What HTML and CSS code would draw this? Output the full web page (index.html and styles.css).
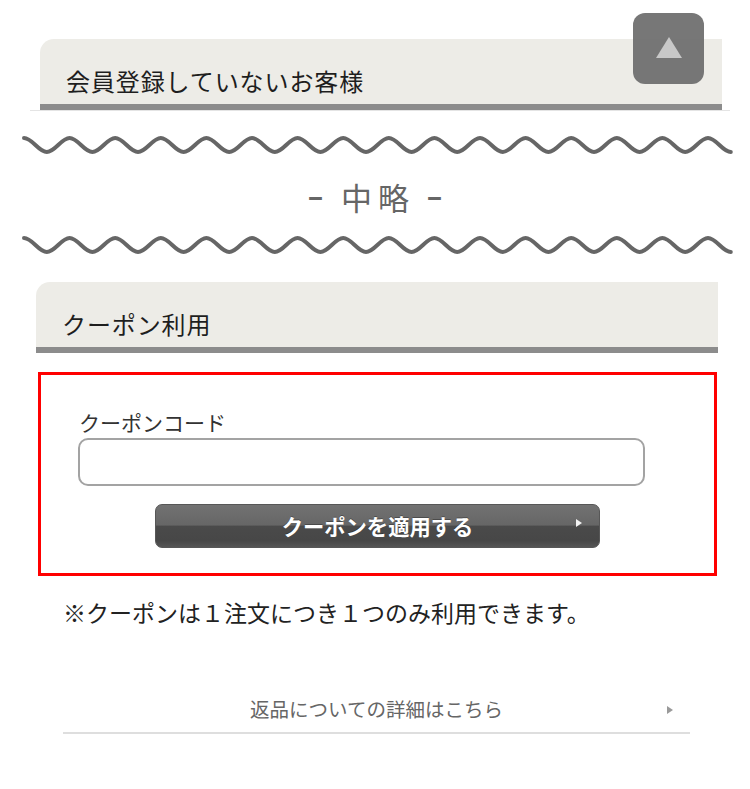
FILE: index.html
```html
<!DOCTYPE html>
<html lang="ja">
<head>
<meta charset="utf-8">
<link rel="stylesheet" href="styles.css">
</head>
<body>
<div class="page">
  <div class="sec1">
    <h2 class="head head1">会員登録していないお客様</h2>
  </div>

  <div class="omit">
    <svg class="wave" viewBox="0 0 750 24" width="750" height="24" aria-hidden="true">
      <path d="M24 5 C32.2 5 38.6 19 46.8 19 S61.4 5 69.6 5 S84.2 19 92.4 19 S107 5 115.2 5 S129.8 19 138 19 S152.6 5 160.8 5 S175.4 19 183.6 19 S198.2 5 206.4 5 S221 19 229.2 19 S243.8 5 252 5 S266.6 19 274.8 19 S289.4 5 297.6 5 S312.2 19 320.4 19 S335 5 343.2 5 S357.8 19 366 19 S380.6 5 388.8 5 S403.4 19 411.6 19 S426.2 5 434.4 5 S449 19 457.2 19 S471.8 5 480 5 S494.6 19 502.8 19 S517.4 5 525.6 5 S540.2 19 548.4 19 S563 5 571.2 5 S585.8 19 594 19 S608.6 5 616.8 5 S631.4 19 639.6 19 S654.2 5 662.4 5 S677 19 685.2 19 S699.8 5 708 5 S722.6 19 730.8 19"/>
    </svg>
    <p class="omit-text"><span class="dash">–</span><span class="omit-word">中</span><span class="omit-word">略</span><span class="dash">–</span></p>
    <svg class="wave" viewBox="0 0 750 24" width="750" height="24" aria-hidden="true">
      <path d="M24 5 C32.2 5 38.6 19 46.8 19 S61.4 5 69.6 5 S84.2 19 92.4 19 S107 5 115.2 5 S129.8 19 138 19 S152.6 5 160.8 5 S175.4 19 183.6 19 S198.2 5 206.4 5 S221 19 229.2 19 S243.8 5 252 5 S266.6 19 274.8 19 S289.4 5 297.6 5 S312.2 19 320.4 19 S335 5 343.2 5 S357.8 19 366 19 S380.6 5 388.8 5 S403.4 19 411.6 19 S426.2 5 434.4 5 S449 19 457.2 19 S471.8 5 480 5 S494.6 19 502.8 19 S517.4 5 525.6 5 S540.2 19 548.4 19 S563 5 571.2 5 S585.8 19 594 19 S608.6 5 616.8 5 S631.4 19 639.6 19 S654.2 5 662.4 5 S677 19 685.2 19 S699.8 5 708 5 S722.6 19 730.8 19"/>
    </svg>
  </div>

  <div class="sec2">
    <h2 class="head head2">クーポン利用</h2>
  </div>

  <div class="coupon-box">
    <label class="coupon-label" for="coupon">クーポンコード</label>
    <input class="coupon-input" id="coupon" type="text">
    <button class="coupon-btn" type="button">
      <span class="btn-text">クーポンを適用する</span>
      <span class="btn-arrow"></span>
    </button>
  </div>

  <p class="note">※クーポンは１注文につき１つのみ利用できます。</p>

  <a class="return-link" href="#">
    <span class="link-text">返品についての詳細はこちら</span>
    <span class="link-arrow"></span>
  </a>
</div>

<a class="to-top" href="#" aria-label="ページトップへ"><span class="to-top-tri"></span></a>
</body>
</html>
```

FILE: styles.css
```css
html, body {
  margin: 0;
  padding: 0;
  background: #ffffff;
}

body {
  font-family: "Noto Sans CJK JP", "Noto Sans", sans-serif;
  color: #222;
  width: 750px;
  height: 789px;
  overflow: hidden;
  position: relative;
}

.page {
  padding-top: 39px;
}

.head {
  margin: 0;
  height: 71px;
  box-sizing: border-box;
  background: #edece7;
  border-bottom: 6px solid #8c8c8c;
  border-top-left-radius: 14px;
  font-size: 24px;
  font-weight: 400;
  letter-spacing: 0.9px;
  color: #1e1e1e;
  display: flex;
  align-items: center;
  padding-top: 18px;
}

.sec1 {
  margin: 0 20px 0 30px;
  border-bottom: 1px solid #e4e4e4;
}

.head1 {
  margin: 0 8px 0 10px;
  padding-left: 26px;
}

.omit {
  margin-top: 22px;
}

.wave {
  display: block;
}

.wave path {
  fill: none;
  stroke: #666666;
  stroke-width: 4;
  stroke-linecap: round;
}

.omit-text {
  margin: 0;
  height: 76px;
  display: flex;
  justify-content: center;
  align-items: center;
  color: #666;
  padding: 2px 0 0 0;
  box-sizing: border-box;
}

.omit-word {
  font-size: 31px;
  line-height: 1;
  margin: 0 3px;
}

.dash {
  font-family: "Noto Sans", sans-serif;
  font-size: 30px;
  line-height: 1;
  font-weight: 600;
  margin: 0 15px;
}

.sec2 {
  margin: 25px 32px 0 36px;
}

.head2 {
  padding-left: 26px;
}

.coupon-box {
  margin: 19px 33px 0 38px;
  border: 3px solid #ff0000;
  padding: 34px 0 25px 37px;
  display: flex;
  flex-direction: column;
  align-items: flex-start;
}

.coupon-label {
  font-size: 21px;
  line-height: 26px;
  color: #333;
  margin-left: 1px;
}

.coupon-input {
  margin-top: 3px;
  width: 567px;
  height: 48px;
  box-sizing: border-box;
  border: 2px solid #a3a3a3;
  border-radius: 10px;
  background: #fff;
  padding: 0 12px;
  font-size: 18px;
}

.coupon-btn {
  margin: 18px 0 0 77px;
  width: 445px;
  height: 44px;
  box-sizing: border-box;
  border: 1px solid #575757;
  border-radius: 7px;
  background: linear-gradient(to bottom, #727272 0%, #666 48%, #4a4a4a 50%, #474747 85%, #555 100%);
  position: relative;
  display: flex;
  align-items: center;
  justify-content: center;
  padding: 0;
  font-family: "Noto Sans CJK JP", "Noto Sans", sans-serif;
  cursor: pointer;
}

.btn-text {
  color: #fff;
  font-size: 21.3px;
  font-weight: 700;
  line-height: 1;
  text-shadow: 0 -1px 0 rgba(0,0,0,0.3);
}

.btn-arrow {
  position: absolute;
  right: 17px;
  top: 14px;
  width: 0;
  height: 0;
  border-left: 6px solid #f2f2f2;
  border-top: 4px solid transparent;
  border-bottom: 4px solid transparent;
}

.note {
  margin: 21px 0 0 63px;
  font-size: 23px;
  line-height: 30px;
  color: #222;
}

.return-link {
  margin: 67px 60px 0 63px;
  position: relative;
  display: flex;
  justify-content: center;
  align-items: center;
  padding: 0 0 8px 0;
  border-bottom: 2px solid #dedede;
  text-decoration: none;
}

.link-text {
  font-size: 19.5px;
  line-height: 30px;
  color: #666;
}

.link-arrow {
  position: absolute;
  right: 17px;
  top: 12px;
  width: 0;
  height: 0;
  border-left: 6px solid #9a9a9a;
  border-top: 4px solid transparent;
  border-bottom: 4px solid transparent;
}

.to-top {
  position: absolute;
  left: 633px;
  top: 13px;
  width: 71px;
  height: 71px;
  border-radius: 12px;
  background: rgba(112, 112, 112, 0.95);
  display: flex;
  align-items: center;
  justify-content: center;
}

.to-top-tri {
  width: 0;
  height: 0;
  border-bottom: 21px solid #c8c8c8;
  border-left: 13px solid transparent;
  border-right: 13px solid transparent;
  margin-top: -2px;
}
```
